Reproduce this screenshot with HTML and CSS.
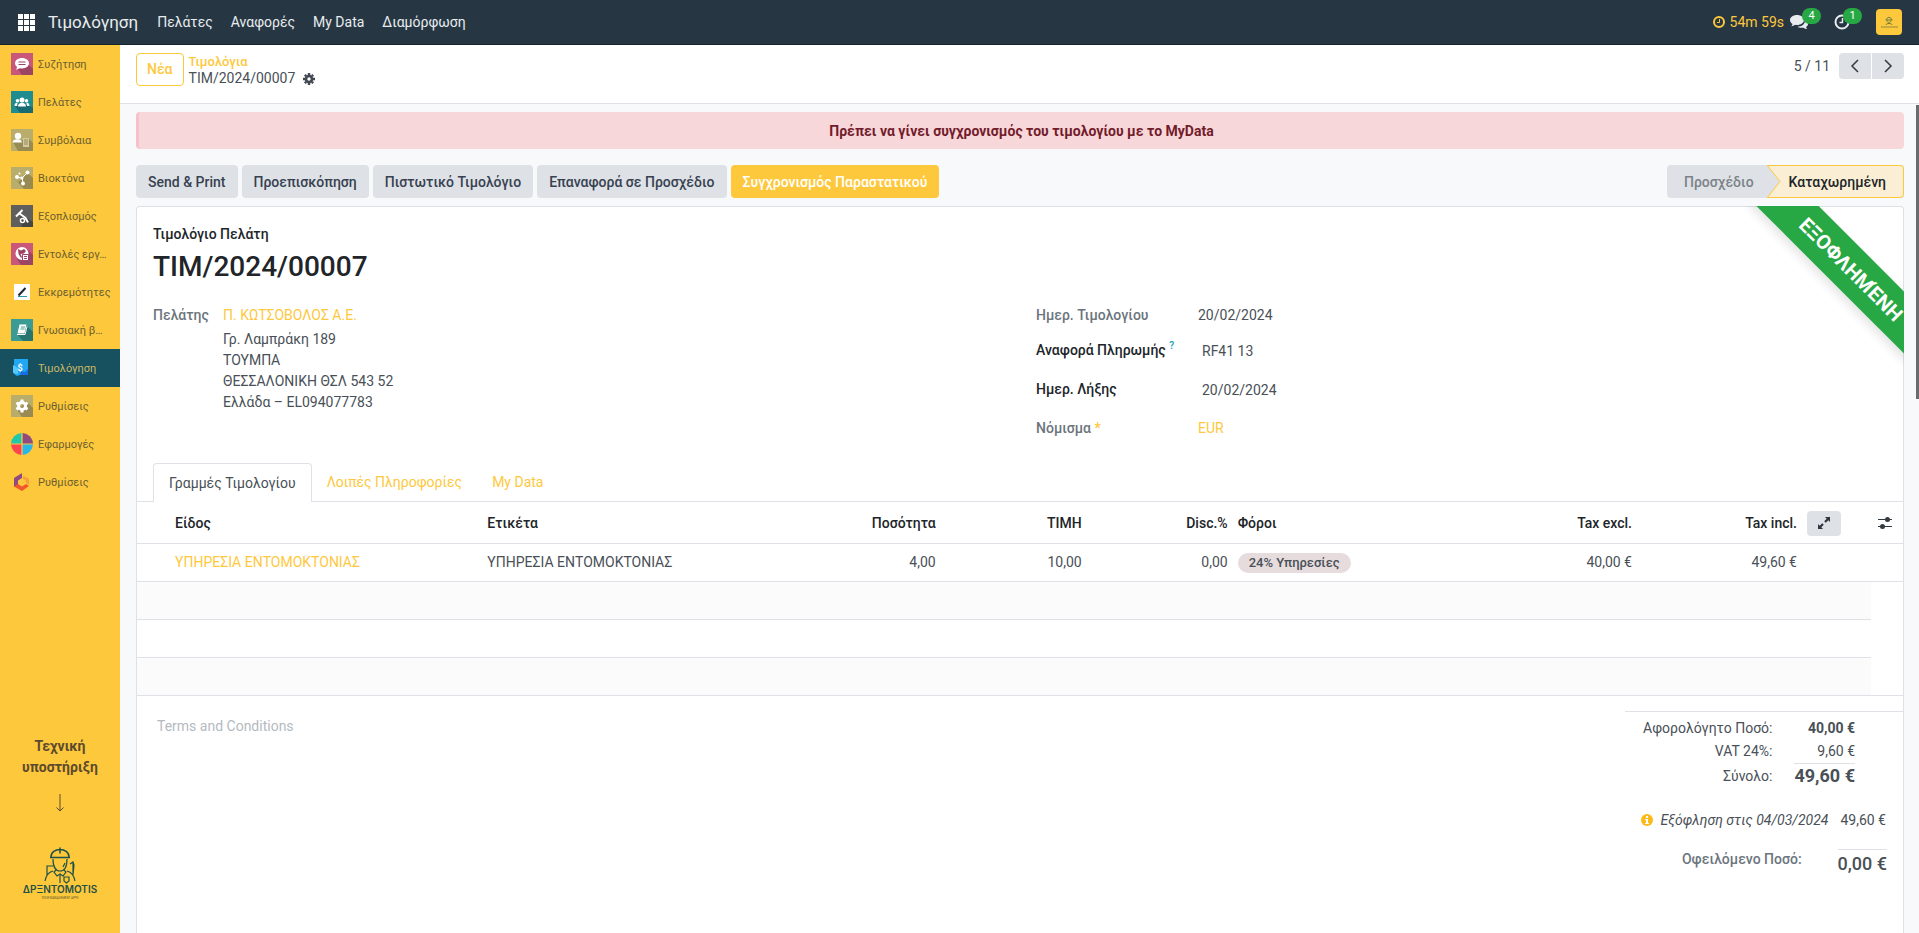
FILE: index.html
```
<!DOCTYPE html>
<html lang="el">
<head>
    <meta charset="UTF-8">
    <meta name="viewport" content="width=device-width, initial-scale=1.0">
    <title>TIM/2024/00007 - Τιμολόγηση</title>
    <link rel="stylesheet" href="styles.css">
</head>
<body>

<header class="navbar">
    <button class="apps-button" aria-label="Apps">
        <svg width="17" height="17" viewBox="0 0 17 17" fill="#fff">
            <path d="M0 0h5v5H0zM6 0h5v5H6zM12 0h5v5h-5zM0 6h5v5H0zM6 6h5v5H6zM12 6h5v5h-5zM0 12h5v5H0zM6 12h5v5H6zM12 12h5v5h-5z"/>
        </svg>
    </button>
    <a class="brand" href="#">Τιμολόγηση</a>
    <nav class="menu">
        <a href="#">Πελάτες</a>
        <a href="#">Αναφορές</a>
        <a href="#">My Data</a>
        <a href="#">Διαμόρφωση</a>
    </nav>
    <div class="systray">
        <span class="timer">
            <svg width="14" height="14" viewBox="0 0 14 14" fill="none" stroke="currentColor" stroke-width="2">
                <circle cx="7" cy="7" r="5"/>
                <path d="M7.5 4v3.5H5" stroke-width="1"/>
            </svg>
            54m 59s
        </span>
        <button class="tray-button" aria-label="Messages">
            <svg width="18" height="16" viewBox="0 0 18 16" fill="#e9ecef">
                <path d="M7 1c3.900 0 7 2.200 7 5s-3.100 5-7 5c-.6 0-1.200-.1-1.800-.2C4 11.700 2.600 12.100 1.200 12.200c.6-.7 1.200-1.400 1.300-2.300C1 9 0 7.600 0 6c0-2.800 3.100-5 7-5z"/>
                <path d="M15 6.200c1.800.8 3 2.100 3 3.700 0 1.200-.8 2.300-2 3.100.1.800.7 1.500 1.200 2.100-1.500-.1-2.800-.6-3.900-1.400-2.200.4-4.400 0-5.900-1 4.300-.1 7.700-2.600 7.600-6.500z"/>
            </svg>
            <span class="badge">4</span>
        </button>
        <button class="tray-button tray-clock" aria-label="Activities">
            <svg width="16" height="16" viewBox="0 0 16 16" fill="none" stroke="#e9ecef" stroke-width="2">
                <circle cx="8" cy="8" r="6.500"/>
                <path d="M8.500 4v4.500H5.500" stroke-width="1.500"/>
            </svg>
            <span class="badge">1</span>
        </button>
        <button class="avatar" aria-label="User">
            <svg width="26" height="26" viewBox="0 0 26 26" fill="none" stroke="#6f7d3c">
                <path d="M10.500 11c0-3.500 5-3.500 5 0M9.500 11h7M11 11.500c.5 2.500 3.500 2.500 4 0M10 16c0-2 6-2 6 0"/>
                <path d="M5 18h17" stroke-width="1" stroke="#8f8a45"/>
            </svg>
        </button>
    </div>
</header>

<div class="workspace">
    <aside class="sidebar">
        <nav class="side-menu">
            <a href="#">
                <svg viewBox="0 0 22 22"><path fill="#c9577a" d="M0 0h22v22H0z"/><path fill="#9c4463" d="M18 12l4 4v6H11l-5-7z"/><path fill="#fff" d="M11 5c4 0 7 2.300 7 5.200s-3 5.200-7 5.200l-2-.2-4 1.600 1.200-2.800C4.800 13 4 11.700 4 10.200 4 7.300 7 5 11 5z"/><path stroke="#9c4463" d="M7.500 9h7M7.500 11.500h7"/></svg>
                <span>Συζήτηση</span>
            </a>
            <a href="#">
                <svg viewBox="0 0 22 22"><path fill="#1f8d8f" d="M0 0h22v22H0z"/><path fill="#176b71" d="M18 14l4 3v5H9l-5-7z"/><g fill="#fff"><circle cx="11" cy="9" r="2.500"/><circle cx="6.500" cy="9.800" r="1.800"/><circle cx="15.500" cy="9.800" r="1.800"/><path d="M7 15.500c0-5 8-5 8 0zM3.500 15c0-4 3-3.500 3-3L6 15zM18.500 15c0-4-3-3.500-3-3l.5 3z"/></g></svg>
                <span>Πελάτες</span>
            </a>
            <a href="#">
                <svg viewBox="0 0 22 22"><path fill="#b9ad6b" d="M0 0h22v22H0z"/><path fill="#988a52" d="M2 13l16-3 4 4v8H7z"/><circle cx="7" cy="7" r="3.200" fill="#fff"/><path fill="#fff" d="M1.500 13.500c0-4.500 9.500-4.500 9.500 0z"/><path fill="#d2cba2" d="M12 9h6v9h-6z"/><path stroke="#988a52" d="M13 11h4M13 13h4M13 15h4"/></svg>
                <span>Συμβόλαια</span>
            </a>
            <a href="#">
                <svg viewBox="0 0 22 22"><path fill="#b9ad6b" d="M0 0h22v22H0z"/><path fill="#988a52" d="M3 11l4 4 5-4 5-5 5 5v11H13z"/><path stroke="#fff" fill="none" d="M6 10l5 1 5-5M11 11l1 5"/><g fill="#fff"><circle cx="6" cy="10" r="2"/><circle cx="11" cy="11" r="1.500"/><circle cx="16.500" cy="5.500" r="2"/><circle cx="12" cy="16.500" r="2"/><circle cx="8.500" cy="6.500" r="1"/></g></svg>
                <span>Βιοκτόνα</span>
            </a>
            <a href="#">
                <svg viewBox="0 0 22 22" fill="none"><path fill="#5f605e" d="M0 0h22v22H0z"/><path fill="#444545" d="M9 9l13 8v5H11z"/><path stroke="#fff" stroke-width="2" d="M5 11.500l6.500-6.500M8.500 8.500l6 4.500 2.500 4.500"/><circle cx="11.500" cy="15.500" r="2" stroke="#fff" stroke-width="1.500"/></svg>
                <span>Εξοπλισμός</span>
            </a>
            <a href="#">
                <svg viewBox="0 0 22 22"><path fill="#c9577a" d="M0 0h22v22H0z"/><path fill="#9c4463" d="M16 6l6 6v10H10l-4-6z"/><circle cx="11" cy="10.500" r="6.500" fill="#fff"/><path fill="#9c4463" d="M7 6l3 1.500 3-1.500 2 2-2 2.500-3.500.5L11 14l-1 1-2.500-4z"/><path fill="#fff" stroke="#9c4463" d="M11.500 11.500h6v6h-6zM13 13.500h3M13 15.500h3"/></svg>
                <span>Εντολές εργ…</span>
            </a>
            <a href="#">
                <svg viewBox="0 0 22 22" fill="none"><path fill="#fff" d="M3 3h16v16H3z"/><path stroke="#2b9aa0" d="M7 15.500h9"/><path stroke="#1b2536" stroke-width="2" d="M7.500 14.500l7-7.500"/></svg>
                <span>Εκκρεμότητες</span>
            </a>
            <a href="#">
                <svg viewBox="0 0 22 22"><path fill="#3a9c94" d="M0 0h22v22H0z"/><path fill="#27756f" d="M6 15l9-9 7 7v9H12z"/><path fill="#fff" d="M8.500 5.500h7l-2 9h-7z"/><path fill="none" stroke="#fff" d="M6 15.500h8l2-8"/><path stroke="#3a9c94" d="M10 8h4M9.500 10h4"/></svg>
                <span>Γνωσιακή β…</span>
            </a>
            <a href="#" class="active">
                <svg viewBox="0 0 22 22"><path fill="#1a6fe0" d="M5 2h12v16H5z"/><path fill="#21a8f5" d="M3 2h14v10l-3 3-4-1-1 4-3 1-3-2z"/><path fill="#55c8ff" d="M2 8l5 3v6l-5-1z"/><text x="9" y="14" text-anchor="middle" class="dollar">$</text></svg>
                <span>Τιμολόγηση</span>
            </a>
            <a href="#">
                <svg viewBox="0 0 22 22"><path fill="#b9ad6b" d="M0 0h22v22H0z"/><path fill="#988a52" d="M15 6l7 7v9H11l-4-6z"/><circle cx="11" cy="11" r="3.500" fill="none" stroke="#fff" stroke-width="3"/><path stroke="#fff" stroke-width="3" d="M11 4.500v2.500M11 15v2.500M5.400 7.800l2 1.200M14.600 13l2 1.200M5.400 14.200l2-1.200M14.600 9l2-1.200"/></svg>
                <span>Ρυθμίσεις</span>
            </a>
            <a href="#">
                <svg viewBox="0 0 22 22"><path fill="#21c7a9" d="M10.400 10.400H0A11 11 0 0 1 10.400 0z"/><path fill="#8f4a80" d="M11.600 10.400V0A11 11 0 0 1 22 10.400z"/><path fill="#ff4351" d="M10.400 11.600V22A11 11 0 0 1 0 11.600z"/><path fill="#29b6e8" d="M11.600 11.600H22A11 11 0 0 1 11.600 22z"/></svg>
                <span>Εφαρμογές</span>
            </a>
            <a href="#">
                <svg viewBox="0 0 22 22"><path fill="#8f4a80" d="M11 2v5l-4 2.500V14l-4 2V7z"/><path fill="#f0582c" d="M3 15.500L7 13l4 2.500 4-2.500 3 2-7 5z"/><path fill="#f7a13d" d="M12 5l6 2.500V14l-3-2V9.500L12 8z"/></svg>
                <span>Ρυθμίσεις</span>
            </a>
        </nav>
        <div class="support">
            <p>Τεχνική<br>υποστήριξη</p>
            <svg class="arrow-down" width="10" height="20" viewBox="0 0 10 20" fill="none" stroke="#5c4a2e">
                <path d="M5 1v17M1.500 14.500L5 18l3.500-3.500"/>
            </svg>
            <svg class="logo" width="80" height="56" viewBox="0 0 80 56" fill="none" stroke="#1f5146" stroke-width="1.200">
                <path d="M31 12c0-10 18-10 18 0M30 12.500h20M40 2.500v6" stroke-width="1.500"/>
                <path d="M33 14c0 8 3 12 7 12s7-4 7-12M36 25l-2 2 3 4 3-2 3 2 3-4-2-2"/>
                <path d="M43 22l2-4M25 36c1-6 4-9 8-10M55 36c-1-6-4-9-8-10M27 30V21h6M40 30v8M53 28V18M50 19l3-2 1 3-1 10M44 32h5v4l-2.500 2-2.500-2z"/>
                <text x="40" y="48" text-anchor="middle" class="logo-name">ΔPΞNTOMOTIS</text>
                <text x="40" y="54" text-anchor="middle" class="logo-tag">YOUR MANAGEMENT APPS</text>
            </svg>
        </div>
    </aside>

    <main class="content">
        <div class="control-panel">
            <button class="btn-new">Νέα</button>
            <div class="breadcrumb">
                <a href="#">Τιμολόγια</a>
                <div class="current">
                    TIM/2024/00007
                    <svg width="12" height="12" viewBox="0 0 12 12" fill="none" stroke="#414852">
                        <circle cx="6" cy="6" r="3" stroke-width="2.600"/>
                        <path stroke-width="2.400" d="M6 0v2M6 10v2M0 6h2M10 6h2M1.800 1.800l1.400 1.400M8.800 8.800l1.400 1.400M1.800 10.200l1.400-1.400M8.800 3.200l1.400-1.400"/>
                    </svg>
                </div>
            </div>
            <div class="pager">
                <span>5 / 11</span>
                <div class="pager-buttons">
                    <button aria-label="Previous"><svg width="10" height="14" viewBox="0 0 10 14"><path d="M8 1L2 7l6 6"/></svg></button>
                    <button aria-label="Next"><svg width="10" height="14" viewBox="0 0 10 14"><path d="M2 1l6 6-6 6"/></svg></button>
                </div>
            </div>
        </div>

        <div class="form-view">
            <div class="alert">Πρέπει να γίνει συγχρονισμός του τιμολογίου με το MyData</div>

            <div class="statusbar">
                <button class="btn">Send &amp; Print</button>
                <button class="btn">Προεπισκόπηση</button>
                <button class="btn">Πιστωτικό Τιμολόγιο</button>
                <button class="btn">Επαναφορά σε Προσχέδιο</button>
                <button class="btn btn-primary">Συγχρονισμός Παραστατικού</button>
                <div class="states">
                    <button class="state">Προσχέδιο
                        <svg class="state-arrow" width="14" height="33" viewBox="0 0 14 33"><path fill="#dee2e6" d="M0 0l13 16.500L0 33z"/><path fill="none" stroke="#fec83c" d="M0 0l13 16.500L0 33"/></svg>
                    </button>
                    <button class="state current-state">Καταχωρημένη</button>
                </div>
            </div>

            <div class="sheet">
                <div class="ribbon"><span>ΕΞΟΦΛΗΜΈΝΗ</span></div>

                <div class="sheet-top">
                    <div class="doc-type">Τιμολόγιο Πελάτη</div>
                    <h1>TIM/2024/00007</h1>

                    <div class="groups">
                        <div class="partner">
                            <span class="label">Πελάτης</span>
                            <div>
                                <a href="#">Π. ΚΩΤΣΟΒΟΛΟΣ Α.Ε.</a>
                                <address>
                                    Γρ. Λαμπράκη 189<br>
                                    ΤΟΥΜΠΑ<br>
                                    ΘΕΣΣΑΛΟΝΙΚΗ ΘΣΛ 543 52<br>
                                    Ελλάδα – EL094077783
                                </address>
                            </div>
                        </div>
                        <div class="details">
                            <span class="label readonly">Ημερ. Τιμολογίου</span>
                            <span class="readonly">20/02/2024</span>
                            <label class="label editable" for="reference">Αναφορά Πληρωμής <sup>?</sup></label>
                            <input id="reference" type="text" value="RF41 13">
                            <label class="label editable" for="due">Ημερ. Λήξης</label>
                            <input id="due" type="text" value="20/02/2024">
                            <span class="label">Νόμισμα <span class="required">*</span></span>
                            <a href="#">EUR</a>
                        </div>
                    </div>
                </div>

                <div class="tabs">
                    <button class="tab active">Γραμμές Τιμολογίου</button>
                    <button class="tab">Λοιπές Πληροφορίες</button>
                    <button class="tab">My Data</button>
                </div>

                <table class="lines">
                    <colgroup>
                        <col class="col-handle">
                        <col>
                        <col>
                        <col class="col-number">
                        <col class="col-number">
                        <col class="col-number">
                        <col>
                        <col class="col-excl">
                        <col class="col-incl">
                        <col class="col-expand">
                        <col class="col-options">
                    </colgroup>
                    <thead>
                        <tr>
                            <th></th>
                            <th>Είδος</th>
                            <th>Ετικέτα</th>
                            <th class="num">Ποσότητα</th>
                            <th class="num">ΤΙΜΗ</th>
                            <th class="num">Disc.%</th>
                            <th>Φόροι</th>
                            <th class="num">Tax excl.</th>
                            <th class="num">Tax incl.</th>
                            <th>
                                <button class="expand" aria-label="Expand">
                                    <svg width="12" height="12" viewBox="0 0 12 12" fill="#2f3640"><path d="M7 0h5v5l-1.700-1.700-2.500 2.500-1.600-1.600 2.500-2.500zM5 12H0V7l1.700 1.700 2.500-2.500 1.600 1.600-2.500 2.500z"/></svg>
                                </button>
                            </th>
                            <th class="options">
                                <button class="columns" aria-label="Columns">
                                    <svg width="14" height="12" viewBox="0 0 14 12" fill="#343a40"><path stroke="#343a40" d="M0 2.500h14M0 9.500h14"/><circle cx="9.500" cy="2.500" r="2.500"/><circle cx="4.500" cy="9.500" r="2.500"/></svg>
                                </button>
                            </th>
                        </tr>
                    </thead>
                    <tbody>
                        <tr>
                            <td></td>
                            <td><a href="#">ΥΠΗΡΕΣΙΑ ΕΝΤΟΜΟΚΤΟΝΙΑΣ</a></td>
                            <td>ΥΠΗΡΕΣΙΑ ΕΝΤΟΜΟΚΤΟΝΙΑΣ</td>
                            <td class="num">4,00</td>
                            <td class="num">10,00</td>
                            <td class="num">0,00</td>
                            <td><span class="tag">24% Υπηρεσίες</span></td>
                            <td class="num">40,00 €</td>
                            <td class="num">49,60 €</td>
                            <td></td>
                            <td></td>
                        </tr>
                        <tr class="striped"><td colspan="10"></td></tr>
                        <tr><td colspan="10"></td></tr>
                        <tr class="striped"><td colspan="10"></td></tr>
                    </tbody>
                </table>

                <div class="sheet-bottom">
                    <textarea aria-label="Terms and Conditions" placeholder="Terms and Conditions"></textarea>
                    <div class="totals">
                        <dl class="subtotals">
                            <dt>Αφορολόγητο Ποσό:</dt>
                            <dd class="strong">40,00 €</dd>
                            <dt>VAT 24%:</dt>
                            <dd>9,60 €</dd>
                            <dt class="total-label">Σύνολο:</dt>
                            <dd class="total">49,60 €</dd>
                        </dl>
                        <div class="payment">
                            <svg width="12" height="12" viewBox="0 0 12 12"><circle cx="6" cy="6" r="6" fill="#fbb91a"/><path fill="#fff" d="M5 2h2v2H5zM4 5h3v4h1v1H4V9h1V6H4z"/></svg>
                            <em>Εξόφληση στις 04/03/2024</em>
                            <span>49,60 €</span>
                        </div>
                        <div class="due">
                            <span class="label">Οφειλόμενο Ποσό:</span>
                            <span class="due-amount">0,00 €</span>
                        </div>
                    </div>
                </div>
            </div>
            <div class="scroll-thumb"></div>
        </div>
    </main>
</div>

</body>
</html>
```
FILE: styles.css
```
* {
    box-sizing: border-box;
}

body {
    margin: 0;
    min-height: 100vh;
    display: flex;
    flex-direction: column;
    font-family: Roboto, "Noto Sans", sans-serif;
    font-size: 14px;
    line-height: 21px;
    color: #495057;
    background-color: #f8f9fa;
}

a {
    color: #fec83c;
    text-decoration: none;
}

button, input, textarea {
    font: inherit;
    color: inherit;
    border: none;
    background: none;
    padding: 0;
    margin: 0;
}

button {
    cursor: pointer;
}

svg {
    display: block;
    flex-shrink: 0;
}

/* Top bar */
.navbar {
    display: flex;
    align-items: center;
    height: 45px;
    padding: 0 17px 0 18px;
    background-color: #263743;
    border-bottom: 1px solid #17242c;
    color: #e9ecef;
}

.navbar a {
    color: #e9ecef;
}

.brand {
    margin-left: 13px;
    font-size: 17px;
}

.menu {
    display: flex;
    gap: 18px;
    margin-left: 19px;
}

.systray {
    display: flex;
    align-items: center;
    margin-left: auto;
}

.timer {
    display: flex;
    align-items: center;
    gap: 4px;
    margin-right: 6px;
    color: #fec83c;
}

.tray-button {
    position: relative;
    width: 44px;
}

.tray-clock {
    width: 42px;
}

.badge {
    position: absolute;
    left: 12px;
    top: -6px;
    width: 19px;
    border-radius: 8px;
    background-color: #28a745;
    color: #fff;
    font-size: 11px;
    line-height: 16px;
}

.tray-clock .badge {
    left: 9px;
}

.avatar {
    width: 26px;
    height: 26px;
    border-radius: 4px;
    background-color: #fec83c;
}

.workspace {
    display: flex;
    flex: 1;
}

/* Sidebar */
.sidebar {
    display: flex;
    flex-direction: column;
    width: 120px;
    flex-shrink: 0;
    background-color: #fec83c;
}

.side-menu a {
    display: flex;
    align-items: center;
    gap: 5px;
    height: 38px;
    padding: 0 8px 0 11px;
    font-size: 11px;
    color: #6b6030;
}

.side-menu svg {
    width: 22px;
    height: 22px;
}

.side-menu span {
    white-space: nowrap;
}

.side-menu .active {
    background-color: #17505f;
    color: #c9b864;
}

.dollar {
    font-size: 9px;
    font-weight: 700;
    fill: #fff;
}

.support {
    display: flex;
    flex-direction: column;
    align-items: center;
    margin-top: auto;
    padding-bottom: 32px;
    text-align: center;
}

.support p {
    margin: 0 0 15px;
    font-weight: 700;
    color: #5c4a2e;
}

.logo {
    margin-top: 32px;
}

.logo-name {
    font-family: Inter, sans-serif;
    font-size: 10px;
    font-weight: 600;
    fill: #1f5146;
    stroke: none;
}

.logo-tag {
    font-size: 3px;
    fill: #5c5a2e;
    stroke: none;
}

/* Control panel */
.content {
    display: flex;
    flex-direction: column;
    flex: 1;
    min-width: 0;
}

.control-panel {
    display: flex;
    align-items: flex-start;
    height: 59px;
    padding: 8px 15px 0 16px;
    background-color: #fff;
    border-bottom: 1px solid #dee2e6;
}

.btn-new {
    height: 33px;
    padding: 0 10px;
    border: 1px solid #fec83c;
    border-radius: 4px;
    color: #fec83c;
    font-weight: 500;
}

.breadcrumb {
    margin-left: 5px;
    line-height: 17px;
}

.breadcrumb a {
    font-size: 13px;
    font-weight: 500;
}

.current {
    display: flex;
    align-items: center;
    gap: 8px;
}

.pager {
    display: flex;
    align-items: center;
    gap: 9px;
    margin-left: auto;
}

.pager-buttons {
    display: flex;
    gap: 1px;
}

.pager button {
    display: flex;
    align-items: center;
    justify-content: center;
    width: 32px;
    height: 26px;
    background-color: #dee2e6;
}

.pager button:first-child {
    border-radius: 4px 0 0 4px;
}

.pager button:last-child {
    border-radius: 0 4px 4px 0;
}

.pager path {
    fill: none;
    stroke: #343a40;
    stroke-width: 1.5;
}

/* Form */
.form-view {
    position: relative;
    display: flex;
    flex-direction: column;
    flex: 1;
    padding: 8px 15px 0 16px;
}

.alert {
    padding: 9px 16px 7px;
    border-left: 3px solid #f5c2cb;
    border-radius: 4px;
    background-color: #f8d7da;
    color: #721c2b;
    font-weight: 700;
    text-align: center;
}

.statusbar {
    display: flex;
    gap: 4px;
    margin: 16px 0 8px;
}

.btn {
    height: 33px;
    padding: 1px 12px 0;
    border-radius: 4px;
    background-color: #dee2e6;
    color: #374151;
    font-weight: 500;
}

.btn-primary {
    background-color: #fec83c;
    color: #fff;
}

.states {
    display: flex;
    margin-left: auto;
}

.state {
    position: relative;
    height: 33px;
    padding: 1px 13px 0 17px;
    border-radius: 4px 0 0 4px;
    background-color: #dee2e6;
    color: #7c8289;
    font-weight: 500;
}

.state-arrow {
    position: absolute;
    left: 100%;
    top: 0;
    z-index: 1;
}

.current-state {
    padding: 1px 17px 0 22px;
    border: 1px solid #fec83c;
    border-left: none;
    border-radius: 0 4px 4px 0;
    background-color: #faefd4;
    color: #212529;
}

.sheet {
    position: relative;
    flex: 1;
    border: 1px solid #dee2e6;
    border-bottom: none;
    border-radius: 4px 4px 0 0;
    background-color: #fff;
}

.ribbon {
    position: absolute;
    top: -1px;
    right: -1px;
    width: 160px;
    height: 160px;
    overflow: hidden;
}

.ribbon span {
    position: absolute;
    top: 36px;
    right: -54px;
    width: 225px;
    padding-left: 52px;
    background-color: #28a745;
    box-shadow: 0 5px 10px rgba(0, 0, 0, 0.1);
    color: #fff;
    font-size: 20px;
    font-weight: 700;
    line-height: 44px;
    white-space: nowrap;
    transform: rotate(45deg);
}

.sheet-top {
    padding: 17px 16px 15px;
}

.doc-type {
    color: #212529;
    font-weight: 500;
}

h1 {
    margin: 5px 0 21px;
    color: #212529;
    font-size: 28px;
    font-weight: 500;
    line-height: 34px;
}

.groups {
    display: grid;
    grid-template-columns: 1fr 1fr;
    gap: 32px;
}

.partner {
    display: grid;
    grid-template-columns: 54px 1fr;
    gap: 16px;
    align-items: start;
}

address {
    margin-top: 3px;
    font-style: normal;
}

.label {
    color: #6c757d;
    font-weight: 500;
}

.editable {
    color: #212529;
}

.details {
    display: grid;
    grid-template-columns: 146px 250px;
    grid-template-rows: 26px 39px 39px 39px;
    column-gap: 16px;
    align-items: center;
}

.readonly {
    align-self: start;
}

.details input {
    height: 27px;
    padding: 0 4px;
}

sup {
    color: #0f9bb5;
    font-size: 10px;
    line-height: 0;
}

.required {
    color: #fec83c;
}

.tabs {
    display: flex;
    padding-left: 16px;
    border-bottom: 1px solid #dee2e6;
}

.tab {
    height: 38px;
    padding: 1px 15px 0;
    color: #fec83c;
}

.tab.active {
    height: 39px;
    margin-bottom: -1px;
    border: 1px solid #dee2e6;
    border-bottom: none;
    border-radius: 4px 4px 0 0;
    background-color: #fff;
    color: #495057;
}

/* Invoice lines */
.lines {
    width: 100%;
    table-layout: fixed;
    border-collapse: collapse;
    border-bottom: 1px solid #dee2e6;
}

.col-handle { width: 33px; }
.col-number { width: 146px; }
.col-excl { width: 92px; }
.col-incl { width: 165px; }
.col-expand { width: 69px; }
.col-options { width: 32px; }

.lines th, .lines td {
    height: 38px;
    padding: 0 5px;
    border-bottom: 1px solid #dee2e6;
    text-align: left;
    white-space: nowrap;
}

.lines th {
    height: 41px;
    padding-top: 2px;
    color: #212529;
    font-weight: 500;
}

.lines .num {
    text-align: right;
}

.lines .options {
    padding: 2px 0 0;
}

.striped td {
    background-color: #fbfbfb;
}

.tag {
    display: inline-block;
    padding: 0 11px;
    border-radius: 10px;
    background-color: #e6dcdd;
    font-size: 13px;
    font-weight: 500;
    line-height: 20px;
    vertical-align: middle;
}

.expand {
    display: flex;
    align-items: center;
    justify-content: center;
    width: 34px;
    height: 25px;
    border-radius: 4px;
    background-color: #dee2e6;
}

.columns {
    display: block;
    margin-left: 7px;
}

.sheet-bottom {
    display: flex;
    justify-content: space-between;
    padding: 15px 0 0 20px;
}

textarea {
    width: 400px;
    height: 60px;
    padding: 5px 0;
    resize: none;
}

textarea::placeholder {
    color: #b5babf;
    opacity: 1;
}

.totals {
    width: 278px;
    border-top: 1px solid #dee2e6;
}

.subtotals {
    display: grid;
    grid-template-columns: 1fr auto;
    column-gap: 22px;
    margin: 5px 48px 0 0;
    line-height: 23px;
    text-align: right;
}

.subtotals dd {
    margin: 0;
}

.strong {
    font-weight: 700;
}

.total-label {
    padding-top: 2px;
}

.total {
    border-top: 1px solid #dee2e6;
    font-size: 18px;
    font-weight: 700;
}

.payment {
    display: flex;
    align-items: center;
    justify-content: flex-end;
    margin: 22px 17px 0 0;
}

.payment em {
    margin: 0 12px 0 8px;
}

.due {
    display: flex;
    justify-content: flex-end;
    gap: 36px;
    margin: 18px 16px 0 0;
}

.due-amount {
    padding-top: 2px;
    border-top: 1px solid #dee2e6;
    font-size: 18px;
    font-weight: 500;
    line-height: 24px;
}

.scroll-thumb {
    position: absolute;
    top: 1px;
    right: 0;
    width: 3px;
    height: 294px;
    background-color: #6b6b6b;
}
```
